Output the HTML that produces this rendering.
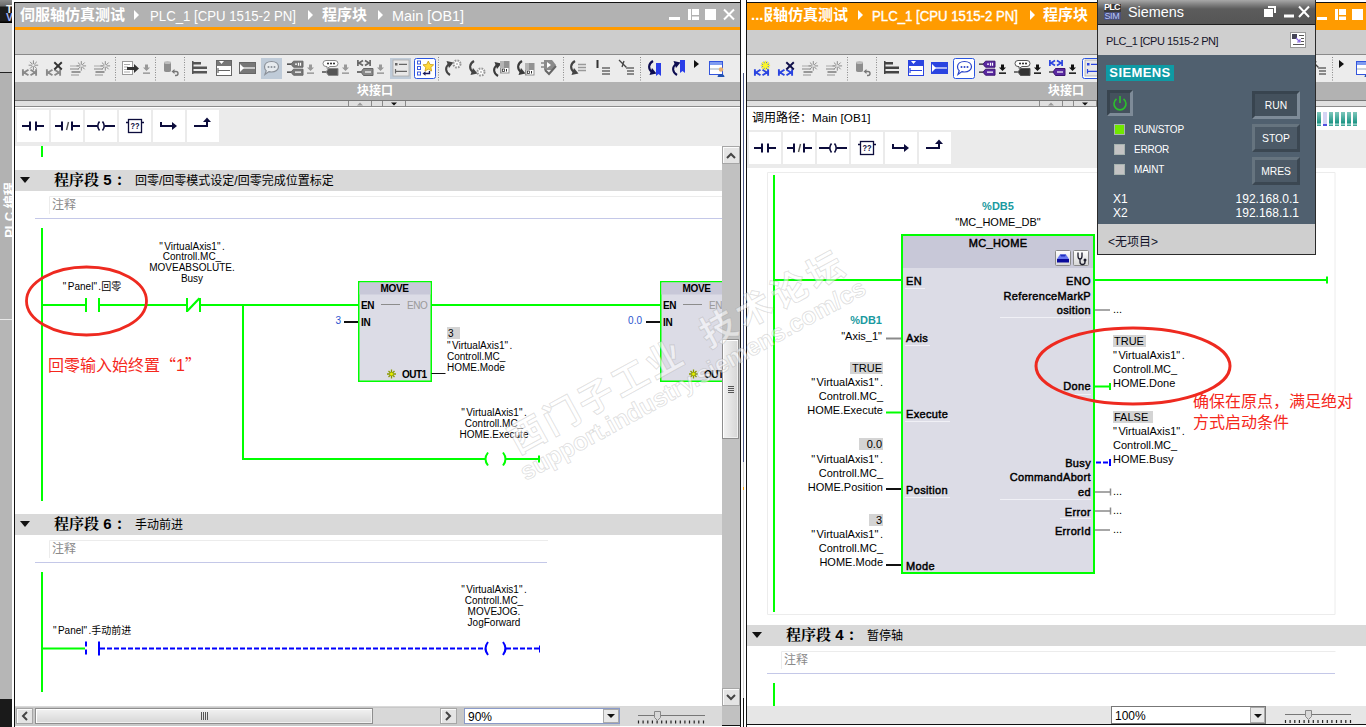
<!DOCTYPE html>
<html lang="zh">
<head>
<meta charset="utf-8">
<title>TIA Portal</title>
<style>
html,body{margin:0;padding:0;background:#fff;}
body{width:1366px;height:727px;overflow:hidden;position:relative;font-family:"Liberation Sans","Noto Sans CJK SC",sans-serif;font-size:12px;color:#000;}
.a{position:absolute;}
.t{position:absolute;white-space:nowrap;line-height:1;}
.b{font-weight:bold;}
.w{color:#fff;}
.c{text-align:center;}
.r{text-align:right;}
.lad{position:absolute;width:32px;height:32px;background:#fff;}
.hdr{position:absolute;background:#d9d9d9;height:21px;}
.seg{position:absolute;white-space:nowrap;line-height:1;font-family:"Liberation Sans","Noto Serif CJK SC",serif;font-weight:bold;font-size:15px;}
.cmt{position:absolute;white-space:nowrap;line-height:1;color:#8a8a8a;font-size:12px;}
.val{background:#d4d4d4;}
.sb{-webkit-text-stroke:0.450px #000;letter-spacing:0.350px;}
.cj{font-family:"Noto Sans CJK SC",sans-serif;}
.ml{position:absolute;line-height:11px;font-size:10px;white-space:nowrap;}
.ml2{position:absolute;line-height:14px;font-size:12px;white-space:nowrap;}
svg{position:absolute;overflow:visible;}
</style>
</head>
<body>
<!-- dock -->
<div class="a" style="left:0px;top:0px;width:12px;height:727px;background:#b6b6b6;"></div>
<div class="a" style="left:0px;top:0px;width:12px;height:23px;background:#1a1a1a;background:linear-gradient(180deg,#8c8c8c 0,#6a6a6a 6px,#1c1c1c 7px,#1c1c1c 21px,#000 22px);overflow:hidden;"></div>
<div class="a" style="left:0;top:0;width:12px;height:22px;overflow:hidden;"><div class="t b" style="left:6px;top:4px;font-size:10.500px;color:#f0f0f0;">T</div>
<div class="t b" style="left:6px;top:12px;font-size:10.500px;color:#a0b0f4;">V</div></div>
<div class="a" style="left:0px;top:23px;width:12px;height:49px;background:#cacaca;"></div>
<div class="a" style="left:0px;top:72px;width:12px;height:1px;background:#222;"></div>
<div class="a" style="left:0px;top:73px;width:12px;height:246px;background:#b2b2b2;"></div>
<div class="a" style="left:0px;top:319px;width:12px;height:1px;background:#e8e8e8;"></div>
<div class="a" style="left:0px;top:699px;width:12px;height:28px;background:#1a1a1a;"></div>
<div class="a" style="left:0;top:150px;width:12px;height:120px;overflow:hidden;"><div class="t b w" style="left:9px;top:60px;font-size:13px;transform:translate(-50%,-50%) rotate(-90deg);">PLC 编程</div></div>
<div class="a" style="left:12px;top:0px;width:2px;height:727px;background:#fff;"></div>
<div class="a" style="left:14px;top:2px;width:1px;height:725px;background:#111;"></div>
<!-- left pane -->
<div class="a" style="left:15px;top:0;width:725px;height:727px;overflow:hidden;background:#fff;"><div class="a" style="left:-15px;top:0;width:1366px;height:727px;">
<div class="a" style="left:15px;top:2px;width:725px;height:1px;background:#111;"></div>
<div class="a" style="left:15px;top:3px;width:725px;height:24px;background:#b2b2b2;"></div>
<div class="a" style="left:15px;top:27px;width:725px;height:3px;background:#ff9b00;"></div>
<div class="a" style="left:15px;top:30px;width:725px;height:24px;background:#cdcdcd;"></div>
<div class="a" style="left:15px;top:54px;width:725px;height:1px;background:#8a8a8a;"></div>
<div class="a" style="left:15px;top:55px;width:725px;height:27px;background:#ececec;"></div>
<div class="a" style="left:15px;top:82px;width:725px;height:18px;background:#b2b2b2;"></div>
<div class="a" style="left:15px;top:100px;width:725px;height:1px;background:#787878;"></div>
<div class="a" style="left:15px;top:101px;width:725px;height:5px;background:#e0e0e0;"></div>
<div class="a" style="left:15px;top:106px;width:725px;height:1px;background:#8c8c8c;"></div>
<div class="a" style="left:15px;top:107px;width:725px;height:1px;background:#fff;"></div>
<div class="a" style="left:15px;top:108px;width:725px;height:38px;background:#ebebeb;"></div>
<div class="t b w" style="left:20px;top:7px;font-size:15px;">伺服轴仿真测试</div>
<div class="t w" style="left:150px;top:8px;font-size:15px;transform:scaleX(0.880);transform-origin:0 0;">PLC_1 [CPU 1515-2 PN]</div>
<div class="t b w" style="left:322px;top:7px;font-size:15px;">程序块</div>
<div class="t w" style="left:392px;top:8px;font-size:15px;transform:scaleX(0.960);transform-origin:0 0;">Main [OB1]</div>
<div class="t b w" style="left:357px;top:85px;font-size:12px;">块接口</div>
<div class="a" style="left:15px;top:170px;width:707px;height:21px;background:#d9d9d9;"></div>
<div class="seg" style="left:54px;top:172px;">程序段 5<span style="margin-left:4px">：</span></div>
<div class="t " style="left:135px;top:175px;font-size:12px;">回零/回零模式设定/回零完成位置标定</div>
<div class="cmt" style="left:52px;top:199px;">注释</div>
<div class="a" style="left:15px;top:514px;width:707px;height:21px;background:#d9d9d9;"></div>
<div class="seg" style="left:54px;top:516px;">程序段 6<span style="margin-left:4px">：</span></div>
<div class="t " style="left:135px;top:519px;font-size:12px;">手动前进</div>
<div class="cmt" style="left:52px;top:543px;">注释</div>
<svg width="1366" height="727" viewBox="0 0 1366 727" style="left:0;top:0;"><g fill="#fff"><path d="M134 10l5 5-5 5z"/><path d="M308 10l5 5-5 5z"/><path d="M378 10l5 5-5 5z"/><rect x="669" y="17" width="11" height="3"/><path d="M688 9h3v11h-3zM692 9h7v6h-7zM692 16.500h7v3.500h-7z"/><rect x="705" y="9" width="11" height="11"/><path d="M724 9.500l10 10M734 9.500l-10 10" stroke="#fff" stroke-width="2" fill="none"/></g><g transform="translate(22,60)"><path d="M0.900 9.300v6.500M6.500 9.800L2 12.500l4.500 2.800M14.100 9.300v6.500M8.500 9.800l4.500 2.700-4.500 2.800" stroke="#8a8a8a" stroke-width="1.900" fill="none"/><path d="M12.6 5.2L16.2 5.2M12.2 6.0L14.8 8.6M11.4 6.4L11.4 10.0M10.6 6.0L8.0 8.6M10.2 5.2L6.6 5.2M10.6 4.4L8.0 1.8M11.4 4.0L11.4 0.4M12.2 4.4L14.8 1.8" stroke="#8a8a8a" stroke-width="1" fill="none"/></g><g transform="translate(46,60)"><path d="M0.900 9.300v6.500M6.500 9.800L2 12.500l4.500 2.800M14.100 9.300v6.500M8.500 9.800l4.500 2.700-4.500 2.800" stroke="#8a8a8a" stroke-width="1.900" fill="none"/><path d="M8.300 2.300l7.500 7.200M15.800 2.300l-7.500 7.200" stroke="#333" stroke-width="1.900"/></g><g transform="translate(69,60)"><path d="M1 6h9" stroke="#c8c8c8" stroke-width="1.800"/><path d="M1 9h9" stroke="#b4b4b4" stroke-width="1.800"/><path d="M2.500 12h9" stroke="#8e8e8e" stroke-width="1.800"/><path d="M2 15h8" stroke="#bcbcbc" stroke-width="1.800"/><path d="M13.5 5.9L17.1 5.9M13.1 6.7L15.7 9.3M12.3 7.1L12.3 10.7M11.5 6.7L8.9 9.3M11.1 5.9L7.5 5.9M11.5 5.1L8.9 2.5M12.3 4.7L12.3 1.1M13.1 5.1L15.7 2.5" stroke="#8c8c8c" stroke-width="1" fill="none"/></g><g transform="translate(93,60)"><path d="M1 6h9" stroke="#c8c8c8" stroke-width="1.800"/><path d="M1 9h9" stroke="#b4b4b4" stroke-width="1.800"/><path d="M2.500 12h9" stroke="#8e8e8e" stroke-width="1.800"/><path d="M2 15h8" stroke="#bcbcbc" stroke-width="1.800"/><path d="M13.5 5.9L17.1 5.9M13.1 6.7L15.7 9.3M12.3 7.1L12.3 10.7M11.5 6.7L8.9 9.3M11.1 5.9L7.5 5.9M11.5 5.1L8.9 2.5M12.3 4.7L12.3 1.1M13.1 5.1L15.7 2.5" stroke="#8c8c8c" stroke-width="1" fill="none"/></g><path d="M115.5 57v24M184.5 57v24M438.5 57v24M563.5 57v24M640.5 57v24M155.5 57v24" stroke="#8a8a8a" stroke-dasharray="1 1.500"/><g transform="translate(122,60)"><rect x="0.500" y="1.500" width="10" height="13" fill="#fff" stroke="#999"/><path d="M2 4.500h6M2 7h4M2 12h6M2 9.500h3" stroke="#aaa" stroke-width="1"/><path d="M5 7h7v-3l5 4.500-5 4.500v-3h-7z" fill="#333"/></g><g transform="translate(143,64.4)" fill="#999"><path d="M2 0h3v3h2l-3.500 3.500L0 3h2z"/><rect x="0" y="8" width="7" height="1.500"/></g><g transform="translate(163,60)"><path d="M1 2.500v8a3.500 1.500 0 0 0 7 0v-8z" fill="#8e8e8e"/><ellipse cx="4.500" cy="2.500" rx="3.500" ry="1.500" fill="#bdbdbd"/><path d="M10 11.500h3a2 2 0 0 1 0 4h-1" stroke="#777" stroke-width="1.400" fill="none"/><path d="M8.500 11.500l3-2.500v5z" fill="#777"/></g><g transform="translate(192,60)" fill="#555"><rect x="0" y="2" width="9" height="2.500"/><rect x="0" y="6.500" width="15" height="2.500"/><rect x="0" y="11" width="15" height="2.500"/><rect x="0" y="1" width="1.500" height="13"/></g><g transform="translate(216,60)"><rect x="0.500" y="0.500" width="15" height="15" fill="#fff" stroke="#666"/><rect x="1" y="1" width="14" height="5" fill="#777"/><path d="M3 1l2.500 3 2.500-3z" fill="#fff"/><path d="M2 10.500h12M2 8v5" stroke="#666" stroke-width="1.200"/></g><g transform="translate(239,60)"><rect x="0.500" y="2.500" width="16" height="11" fill="#777" stroke="#666"/><path d="M1 4l4 4-4 4z" fill="#fff"/><path d="M4 8h12" stroke="#fff" stroke-width="1.200"/></g><rect x="261" y="58" width="21" height="21" fill="#bfcbd8"/><g transform="translate(263,60)"><path d="M8.500 1.500c4.200 0 7 2.300 7 5.300s-3 5.200-7 5.200c-1 0-1.800-.1-2.600-.4L2 14.500l1.200-3.800C2 9.800 1.500 8.400 1.500 6.800c0-3 2.800-5.300 7-5.300z" fill="#e6eaee" stroke="#8a9098" stroke-width="1.200"/><circle cx="5.500" cy="7" r="1" fill="#8a9098"/><circle cx="8.500" cy="7" r="1" fill="#8a9098"/><circle cx="11.500" cy="7" r="1" fill="#8a9098"/></g><g transform="translate(287,60.7)"><path d="M0 3.500h4M0 11.500h4" stroke="#222" stroke-width="1.200"/><path d="M4 3.500l2.500-3h9.500v6h-9.500zM4 11.500l2.500-3h9.500v6h-9.500z" fill="#777" stroke="#666" stroke-width="1"/><path d="M8 3.500h2M11.500 2v3M13.500 2v3M8 11.500h6" stroke="#fff" stroke-width="1.200"/></g><g transform="translate(307,64.4)" fill="#999"><path d="M2 0h3v3h2l-3.500 3.500L0 3h2z"/><rect x="0" y="8" width="7" height="1.500"/></g><g transform="translate(322,60)"><path d="M4 0.500h9a2.500 2.500 0 0 1 0 6h-5l-3 2v-2h-1a2.500 2.500 0 0 1 0-6z" fill="#fff" stroke="#888"/><circle cx="6" cy="3.500" r="1" fill="#222"/><circle cx="9" cy="3.500" r="1" fill="#222"/><circle cx="12" cy="3.500" r="1" fill="#222"/><path d="M0 12h4" stroke="#222" stroke-width="1.200"/><path d="M4 12l2.500-3.500h9.500v7h-9.500z" fill="#555" stroke="#888"/></g><g transform="translate(342,64.4)" fill="#999"><path d="M2 0h3v3h2l-3.500 3.500L0 3h2z"/><rect x="0" y="8" width="7" height="1.500"/></g><g transform="translate(357,60)"><path d="M0.900 0v6M6 0.500L2 3l4 2.500M13.100 0v6M8 0.500l4 2.500-4 2.500" stroke="#666" stroke-width="1.700" fill="none"/><path d="M0 12h4" stroke="#222" stroke-width="1.200"/><path d="M4 12l2.500-3.500h9.500v7h-9.500z" fill="#888" stroke="#666"/><path d="M8 12h6" stroke="#fff" stroke-width="1.200"/></g><g transform="translate(377,64.4)" fill="#999"><path d="M2 0h3v3h2l-3.500 3.500L0 3h2z"/><rect x="0" y="8" width="7" height="1.500"/></g><rect x="390" y="58" width="21" height="21" fill="#bfcbd8"/><g transform="translate(393,60)"><rect x="0" y="0" width="16" height="16" fill="#e8e8e8" stroke="#aaa" stroke-width="0.800"/><rect x="2" y="3" width="2.500" height="2.500" fill="#666"/><path d="M6 4.300h8M2.500 9v4.500M2.500 11.300h11.500" stroke="#666" stroke-width="1.200" fill="none"/></g><rect x="414.5" y="58.5" width="21" height="20" rx="2" fill="#fff" stroke="#2a55e0"/><g transform="translate(417,60)"><rect x="0.500" y="1" width="3" height="3" fill="none" stroke="#3b5be0"/><rect x="0.500" y="6.500" width="3" height="3" fill="none" stroke="#3b5be0"/><rect x="0.500" y="12" width="3" height="3" fill="none" stroke="#3b5be0"/><path d="M10.500 0l1.900 4 4.400.5-3.300 3 .9 4.300-3.900-2.200-3.900 2.200.9-4.300-3.300-3 4.400-.5z" transform="translate(2.400 1) scale(0.850)" fill="#ffd83a" stroke="#c89a10" stroke-width="0.900"/><path d="M12.500 11v2.500h-5" stroke="#1a1a5a" stroke-width="1.400" fill="none"/><path d="M5.500 13.500l3-2.300v4.600z" fill="#1a1a5a"/></g><g transform="translate(445,60)"><path d="M5 15c-5-3-5-8-1-11" stroke="#444" stroke-width="2.100" fill="none"/><path d="M1.500 1l7 1.500-4.500 5.500z" fill="#444"/></g><circle cx="457" cy="64" r="3.500" fill="#fff" stroke="#999" stroke-width="2" stroke-dasharray="1.700 1.050"/><path d="M455.8 62.8l2.400 2.400M458.2 62.8l-2.400 2.400" stroke="#bbb" stroke-width="0.800"/><g transform="translate(469,60)"><path d="M5 1c-5 3-5 8-1 11" stroke="#444" stroke-width="2.100" fill="none"/><path d="M1.500 15l7-1.500-4.500-5.500z" fill="#444"/></g><circle cx="481" cy="72" r="3.500" fill="#fff" stroke="#999" stroke-width="2" stroke-dasharray="1.700 1.050"/><path d="M479.8 70.8l2.400 2.400M482.2 70.8l-2.400 2.400" stroke="#bbb" stroke-width="0.800"/><g transform="translate(493,61)"><path d="M5 15c-5-3-5-8-1-11" stroke="#3a3a3a" stroke-width="2.100" fill="none"/><path d="M1.500 1l7 1.500-4.500 5.500z" fill="#3a3a3a"/></g><rect x="500" y="61" width="9.500" height="12.500" fill="#929292"/><rect x="500" y="61" width="4" height="7" fill="#b4b4b4"/><rect x="501.5" y="68" width="7" height="4.500" fill="#fff"/><rect x="502.5" y="69" width="2" height="2.500" fill="none" stroke="#333" stroke-width="0.800"/><rect x="506" y="69" width="1" height="2.500" fill="#333"/><g transform="translate(517,60)"><path d="M5 1c-5 3-5 8-1 11" stroke="#3a3a3a" stroke-width="2.100" fill="none"/><path d="M1.500 15l7-1.500-4.500-5.500z" fill="#3a3a3a"/></g><rect x="525" y="63" width="9.500" height="12.500" fill="#929292"/><rect x="525" y="63" width="4" height="7" fill="#b4b4b4"/><rect x="526.5" y="70" width="7" height="4.500" fill="#fff"/><rect x="527.5" y="71" width="2" height="2.500" fill="none" stroke="#333" stroke-width="0.800"/><rect x="531" y="71" width="1" height="2.500" fill="#333"/><g transform="translate(541,60)"><path d="M0 3h3M0 7h3" stroke="#555" stroke-width="1.200"/><path d="M3 0h8l4 5-4 5h-8z" fill="#8a8a8a"/><path d="M6 2l4 3-4 3z" fill="#fff"/><path d="M4 10l4 4 7-8" stroke="#666" stroke-width="2" fill="none"/></g><g transform="translate(570,60)"><path d="M5 1c-5 3-5 8-1 11" stroke="#444" stroke-width="2.100" fill="none"/><path d="M1.500 15l7-1.500-4.500-5.500z" fill="#444"/></g><path d="M578 64.5h8M578 67.5h8M578 70.5h8" stroke="#999" stroke-width="1.600"/><path d="M597.5 60v8" stroke="#333" stroke-width="2"/><path d="M602 68h8M602 71h8M602 74h8" stroke="#888" stroke-width="1.800"/><path d="M619 60l8 8M624 61l-2 6" stroke="#444" stroke-width="1.300"/><path d="M626 68h8M627 71h7M627 74h7" stroke="#888" stroke-width="1.800"/><g transform="translate(648,60)"><path d="M5 1c-5 3-5 8-1 11" stroke="#0c0c50" stroke-width="2.100" fill="none"/><path d="M1.500 15l7-1.500-4.500-5.500z" fill="#0c0c50"/></g><path d="M656 63h5v13l-2.500-2-2.500 2z" fill="#2a3ee8"/><g transform="translate(672,60)"><path d="M5 15c-5-3-5-8-1-11" stroke="#0c0c50" stroke-width="2.100" fill="none"/><path d="M1.500 1l7 1.500-4.500 5.500z" fill="#0c0c50"/></g><path d="M680 60h5v13l-2.500-2-2.500 2z" fill="#2a3ee8"/><path d="M694 60l5 4-5 4z" fill="#111"/><g transform="translate(709,61)"><rect x="0.500" y="0.500" width="13" height="13" fill="#fff" stroke="#3355dd"/><rect x="1" y="1" width="12" height="3" fill="#7f9cf0"/><path d="M1 8h12" stroke="#9ab" stroke-width="1"/><circle cx="12" cy="8.500" r="2.200" fill="#e8b070"/><path d="M8.500 16c0-4 7-4 7 0z" fill="#2050b0"/></g><path d="M348.500 101v6M371.500 101v6M382.500 101v6M405.500 101v6" stroke="#8a8a8a"/><path d="M357 105.500l3-3 3 3z" fill="#999"/><path d="M391 102.500h6l-3 3z" fill="#111"/><rect x="17" y="110" width="32" height="32" fill="#fff"/><rect x="51" y="110" width="32" height="32" fill="#fff"/><rect x="85" y="110" width="32" height="32" fill="#fff"/><rect x="119" y="110" width="32" height="32" fill="#fff"/><rect x="153" y="110" width="32" height="32" fill="#fff"/><rect x="187" y="110" width="32" height="32" fill="#fff"/><path d="M22 126h9M30 121.5v9M36 121.5v9M35 126h9" stroke="#0c0c3c" stroke-width="2" fill="none"/><path d="M55 126h8M62 121.5v9M72 121.5v9M71 126h9" stroke="#0c0c3c" stroke-width="2" fill="none"/><path d="M68.5 122l-2 8" stroke="#555" stroke-width="1.400"/><path d="M87 126h10M105 126h10" stroke="#0c0c3c" stroke-width="2"/><path d="M99.5 121.5q-3.500 4.500 0 9M102.5 121.5q3.500 4.500 0 9" stroke="#0c0c3c" stroke-width="1.600" fill="none"/><rect x="128.5" y="119.5" width="13" height="13" fill="#fff" stroke="#0c0c3c" stroke-width="1.300"/><path d="M126 122.5h2.500M141.5 122.5h2.500" stroke="#0c0c3c" stroke-width="1.300"/><text x="135" y="128.8" font-size="9.500" font-weight="bold" font-family="Liberation Sans,sans-serif" text-anchor="middle" fill="#0c0c3c" textLength="9" lengthAdjust="spacingAndGlyphs">??</text><path d="M161 122v4h12" stroke="#0c0c3c" stroke-width="2" fill="none"/><path d="M172 122l5 4-5 4z" fill="#0c0c3c"/><path d="M194 126h13v-5" stroke="#0c0c3c" stroke-width="2" fill="none"/><path d="M203 122l4-4.500 4 4.500z" fill="#0c0c3c"/><path d="M20 177h10l-5.0 6z" fill="#111"/><path d="M20 521h10l-5.0 6z" fill="#111"/><path d="M49.500 214v-17.500h673" stroke="#ececec" fill="none"/><path d="M35 218.500h688" stroke="#c4c8e8"/><path d="M49.500 558v-17.500h498.500" stroke="#ececec" fill="none"/><path d="M35 562.500h512" stroke="#c4c8e8"/><path d="M42 146v11M42 228v273M42 572v120" stroke="#00ff00" stroke-width="2"/><path d="M43 305h43M99 305h88M200 305h158M431 305h229M243 305v154h242M506 459h33M539 455.500v7" stroke="#00ff00" stroke-width="2" fill="none"/><path d="M86 298v14M99 298v14" stroke="#00ff00" stroke-width="2"/><path d="M187 298v14M200 298v14" stroke="#00ff00" stroke-width="2"/><path d="M199.500 298.300l-12.500 13" stroke="#00ff00" stroke-width="2.200"/><path d="M488 452.500q-5 6.500 0 13M503 452.500q5 6.500 0 13" stroke="#00ff00" stroke-width="2" fill="none"/><rect x="358.75" y="281.750" width="72.500" height="99.500" fill="#dcdce6" stroke="#00ff00" stroke-width="1.500"/><rect x="359.5" y="282.500" width="71" height="12" fill="#c8c8d8"/><path d="M381 304.500h19" stroke="#8c8c8c"/><path d="M344 322h14" stroke="#111" stroke-width="2"/><path d="M431.5 373.500h14" stroke="#111"/><path d="M391.5 369.500v9M387 374h9M388.5 371l6 6M394.5 371l-6 6" stroke="#8a9a00" stroke-width="1.300"/><circle cx="391.5" cy="374" r="1.500" fill="#e8f000"/><rect x="660.75" y="281.750" width="72.500" height="99.500" fill="#dcdce6" stroke="#00ff00" stroke-width="1.500"/><rect x="661.5" y="282.500" width="71" height="12" fill="#c8c8d8"/><path d="M683 304.500h19" stroke="#8c8c8c"/><path d="M646 322h14" stroke="#111" stroke-width="2"/><path d="M733.5 373.500h14" stroke="#111"/><path d="M693.5 369.500v9M689 374h9M690.5 371l6 6M696.5 371l-6 6" stroke="#8a9a00" stroke-width="1.300"/><circle cx="693.5" cy="374" r="1.500" fill="#e8f000"/><ellipse cx="86.500" cy="301" rx="60" ry="34" fill="none" stroke="#ee2a20" stroke-width="2.800"/><path d="M43 648.5h42" stroke="#00ff00" stroke-width="2"/><path d="M86 641.5v14" stroke="#0000ff" stroke-width="2" stroke-dasharray="5 3"/><path d="M99 641.5v14" stroke="#0000ff" stroke-width="2"/><path d="M100 648.5h386M506 648.5h33" stroke="#0000ff" stroke-width="2" stroke-dasharray="5 2"/><path d="M539.500 645.5v7" stroke="#0000ff"/><path d="M488 642.0q-5 6.500 0 13M503 642.0q5 6.500 0 13" stroke="#0000ff" stroke-width="2" fill="none"/></svg>
<div class="t " style="left:92px;top:281.6px;font-size:10px;transform:translateX(-50%);"><span style="letter-spacing:0.14em">&quot;</span>Panel<span style="letter-spacing:0.14em">&quot;</span>.回零</div>
<div class="t " style="left:192px;top:241.6px;font-size:10px;transform:translateX(-50%);"><span style="letter-spacing:0.14em">&quot;</span>VirtualAxis1<span style="letter-spacing:0.14em">&quot;</span>.</div>
<div class="t " style="left:192px;top:252.4px;font-size:10px;transform:translateX(-50%);">Controll.MC_</div>
<div class="t " style="left:192px;top:263.2px;font-size:10px;transform:translateX(-50%);">MOVEABSOLUTE.</div>
<div class="t " style="left:192px;top:274.0px;font-size:10px;transform:translateX(-50%);">Busy</div>
<div class="t b" style="left:394.5px;top:284.1px;font-size:10px;transform:translateX(-50%);letter-spacing:-0.400px;">MOVE</div>
<div class="t b" style="left:361px;top:300.6px;font-size:10px;letter-spacing:-0.300px;">EN</div>
<div class="t " style="left:407px;top:300.6px;font-size:10px;color:#9a9a9a;letter-spacing:-0.500px;">ENO</div>
<div class="t b" style="left:361px;top:317.6px;font-size:10px;letter-spacing:-0.300px;">IN</div>
<div class="t b" style="left:402px;top:369.6px;font-size:10px;letter-spacing:-0.500px;">OUT1</div>
<div class="t b" style="left:696.5px;top:284.1px;font-size:10px;transform:translateX(-50%);letter-spacing:-0.400px;">MOVE</div>
<div class="t b" style="left:663px;top:300.6px;font-size:10px;letter-spacing:-0.300px;">EN</div>
<div class="t " style="left:709px;top:300.6px;font-size:10px;color:#9a9a9a;letter-spacing:-0.500px;">ENO</div>
<div class="t b" style="left:663px;top:317.6px;font-size:10px;letter-spacing:-0.300px;">IN</div>
<div class="t b" style="left:704px;top:369.6px;font-size:10px;letter-spacing:-0.500px;">OUT1</div>
<div class="t " style="left:341px;top:316.1px;font-size:10px;transform:translateX(-100%);color:#2a55d0;">3</div>
<div class="t " style="left:642px;top:316.1px;font-size:10px;transform:translateX(-100%);color:#2a55d0;">0.0</div>
<div class="a" style="left:447px;top:327px;width:13px;height:12px;background:#d4d4d4;"></div>
<div class="t " style="left:448px;top:328.6px;font-size:10px;">3</div>
<div class="t " style="left:447px;top:340.6px;font-size:10px;"><span style="letter-spacing:0.14em">&quot;</span>VirtualAxis1<span style="letter-spacing:0.14em">&quot;</span>.</div>
<div class="t " style="left:447px;top:351.6px;font-size:10px;">Controll.MC_</div>
<div class="t " style="left:447px;top:362.6px;font-size:10px;">HOME.Mode</div>
<div class="t " style="left:494px;top:408.1px;font-size:10px;transform:translateX(-50%);"><span style="letter-spacing:0.14em">&quot;</span>VirtualAxis1<span style="letter-spacing:0.14em">&quot;</span>.</div>
<div class="t " style="left:494px;top:419.1px;font-size:10px;transform:translateX(-50%);">Controll.MC_</div>
<div class="t " style="left:494px;top:430.1px;font-size:10px;transform:translateX(-50%);">HOME.Execute</div>
<div class="t " style="left:48px;top:356px;font-size:16px;color:#f5281c;font-weight:400;">回零输入始终置<span class="cj">“</span>1<span class="cj">”</span></div>
<div class="t " style="left:53px;top:625.6px;font-size:10px;"><span style="letter-spacing:0.14em">&quot;</span>Panel<span style="letter-spacing:0.14em">&quot;</span>.手动前进</div>
<div class="t " style="left:494px;top:585.1px;font-size:10px;transform:translateX(-50%);"><span style="letter-spacing:0.14em">&quot;</span>VirtualAxis1<span style="letter-spacing:0.14em">&quot;</span>.</div>
<div class="t " style="left:494px;top:596.2px;font-size:10px;transform:translateX(-50%);">Controll.MC_</div>
<div class="t " style="left:494px;top:607.3px;font-size:10px;transform:translateX(-50%);">MOVEJOG.</div>
<div class="t " style="left:494px;top:618.4px;font-size:10px;transform:translateX(-50%);">JogForward</div>
<div class="a" style="left:722px;top:146px;width:18px;height:581px;background:#c1c1c1;"></div>
<div class="a" style="left:15px;top:706px;width:707px;height:19px;background:#d6d6d6;"></div>
<div class="a" style="left:15px;top:725px;width:725px;height:1px;background:#111;"></div>
<div class="a" style="left:15px;top:726px;width:725px;height:1px;background:#fff;"></div>
<div class="a" style="left:722px;top:146px;width:18px;height:560px;background:#c1c1c1;"></div>
<div class="a" style="left:722px;top:146px;width:18px;height:18px;background:#e4e4e4;box-sizing:border-box;border:1px solid #a6a6a6;box-shadow:inset 1px 1px 0 #fbfbfb;"></div>
<div class="a" style="left:722px;top:688px;width:18px;height:18px;background:#e4e4e4;box-sizing:border-box;border:1px solid #a6a6a6;box-shadow:inset 1px 1px 0 #fbfbfb;"></div>
<div class="a" style="left:722px;top:339px;width:17px;height:100px;background:#e0e0e0;box-sizing:border-box;border:1px solid #8e8e8e;box-shadow:inset 1px 1px 0 #fff,inset -1px -1px 0 #f0f0f0;background:linear-gradient(90deg,#f2f2f2,#d6d6d6);"></div>
<div class="a" style="left:15px;top:706px;width:707px;height:20px;background:#c8c8c8;"></div>
<div class="a" style="left:15px;top:706px;width:707px;height:1px;background:#d8d8d8;"></div>
<div class="a" style="left:16px;top:708px;width:17px;height:16px;background:#e4e4e4;box-sizing:border-box;border:1px solid #a6a6a6;box-shadow:inset 1px 1px 0 #fbfbfb;"></div>
<div class="a" style="left:35px;top:708px;width:338px;height:16px;background:#e0e0e0;box-sizing:border-box;border:1px solid #8e8e8e;box-shadow:inset 1px 1px 0 #fff,inset -1px -1px 0 #f0f0f0;background:linear-gradient(180deg,#f2f2f2,#d6d6d6);"></div>
<div class="a" style="left:373px;top:708px;width:67px;height:16px;background:#d8d8d8;"></div>
<div class="a" style="left:440px;top:708px;width:17px;height:16px;background:#e4e4e4;box-sizing:border-box;border:1px solid #a6a6a6;box-shadow:inset 1px 1px 0 #fbfbfb;"></div>
<div class="a" style="left:464px;top:708px;width:156px;height:16px;background:#fff;box-sizing:border-box;border:1px solid #8a9ac8;"></div>
<div class="t " style="left:468px;top:710.7px;font-size:12px;">90%</div>
<div class="a" style="left:603px;top:709px;width:16px;height:14px;background:#e8e8e8;box-sizing:border-box;border:1px solid #aaa;"></div>
<div class="a" style="left:620px;top:707px;width:102px;height:19px;background:#dadada;"></div>
<svg width="1366" height="727" viewBox="0 0 1366 727" style="left:0;top:0;"><path d="M727 158l4-4 4 4" stroke="#444" stroke-width="2" fill="none"/><path d="M727 695l4 4 4-4" stroke="#444" stroke-width="2" fill="none"/><path d="M728 386.500h6M728 388.500h6M728 390.500h6M728 392.500h6" stroke="#555"/><path d="M27 712l-4 4 4 4" stroke="#444" stroke-width="2" fill="none"/><path d="M446 712l4 4-4 4" stroke="#444" stroke-width="2" fill="none"/><path d="M201.500 712v8M203.500 712v8M205.500 712v8M207.500 712v8" stroke="#555"/><path d="M607 714h8l-4 4z" fill="#111"/><path d="M638 715.500h67" stroke="#777"/><path d="M638.5 720.500v3M643.1 720.500v3M647.8 720.500v3M652.4 720.500v3M657.1 720.500v3M661.7 720.500v3M666.3 720.500v3M671.0 720.500v3M675.6 720.500v3M680.3 720.500v3M684.9 720.500v3M689.5 720.500v3M694.2 720.500v3M698.8 720.500v3M703.5 720.500v3" stroke="#222" stroke-width="1.200"/><path d="M654.500 711.500h6v6l-3 3-3-3z" fill="#d8d8d8" stroke="#888"/></svg>
</div></div>
<!-- splitter -->
<div class="a" style="left:740px;top:0px;width:1px;height:727px;background:#111;"></div>
<div class="a" style="left:741px;top:0px;width:5px;height:727px;background:#fff;"></div>
<div class="a" style="left:743px;top:73px;width:1px;height:389px;background:#4a5684;"></div>
<div class="a" style="left:743px;top:462px;width:1px;height:236px;background:#d0d0d0;"></div>
<div class="a" style="left:743px;top:487px;width:1px;height:3px;background:#ffa000;"></div>
<div class="a" style="left:743px;top:698px;width:1px;height:29px;background:#111;"></div>
<div class="a" style="left:746px;top:0px;width:1px;height:727px;background:#111;"></div>
<!-- right pane -->
<div class="a" style="left:747px;top:0;width:619px;height:727px;overflow:hidden;background:#fff;"><div class="a" style="left:-747px;top:0;width:1366px;height:727px;">
<div class="a" style="left:747px;top:2px;width:619px;height:1px;background:#111;"></div>
<div class="a" style="left:747px;top:3px;width:619px;height:27px;background:#ff9b00;"></div>
<div class="a" style="left:747px;top:30px;width:619px;height:24px;background:#cdcdcd;"></div>
<div class="a" style="left:747px;top:54px;width:619px;height:1px;background:#8a8a8a;"></div>
<div class="a" style="left:747px;top:55px;width:619px;height:27px;background:#ececec;"></div>
<div class="a" style="left:747px;top:82px;width:619px;height:18px;background:#b2b2b2;"></div>
<div class="a" style="left:747px;top:100px;width:619px;height:1px;background:#787878;"></div>
<div class="a" style="left:747px;top:101px;width:619px;height:5px;background:#e0e0e0;"></div>
<div class="a" style="left:747px;top:106px;width:619px;height:1px;background:#8c8c8c;"></div>
<div class="a" style="left:747px;top:130px;width:619px;height:38px;background:#ebebeb;"></div>
<div class="t b w" style="left:751px;top:7px;font-size:15px;">...</div>
<div class="a" style="left:764px;top:3px;width:90px;height:24px;overflow:hidden;"><div class="t b w" style="left:-6px;top:4px;font-size:15px;">服轴仿真测试</div></div>
<div class="t w" style="left:872px;top:8px;font-size:15px;transform:scaleX(0.880);transform-origin:0 0;-webkit-text-stroke:0.400px #fff;">PLC_1 [CPU 1515-2 PN]</div>
<div class="t b w" style="left:1043px;top:7px;font-size:15px;">程序块</div>
<div class="t b w" style="left:1048px;top:85px;font-size:12px;">块接口</div>
<div class="t " style="left:752px;top:112px;font-size:12px;">调用路径：<span style="font-size:11.700px;">Main [OB1]</span></div>
<div class="a" style="left:747px;top:625px;width:619px;height:21px;background:#d9d9d9;"></div>
<div class="seg" style="left:786px;top:627px;">程序段 4<span style="margin-left:4px">：</span></div>
<div class="t " style="left:867px;top:630px;font-size:12px;">暂停轴</div>
<div class="cmt" style="left:784px;top:654px;">注释</div>
<svg width="1366" height="727" viewBox="0 0 1366 727" style="left:0;top:0;"><g fill="#fff"><path d="M858 10l5 5-5 5z"/><path d="M1030 10l5 5-5 5z"/><rect x="1317" y="17" width="10" height="3"/><path d="M1335 9h3v11h-3zM1339 9h7v6h-7zM1339 16.500h7v3.500h-7z"/><rect x="1352" y="9" width="11" height="11"/></g><g transform="translate(754,60)"><path d="M0.900 9.300v6.500M6.500 9.800L2 12.500l4.500 2.800M14.100 9.300v6.500M8.500 9.800l4.500 2.700-4.500 2.800" stroke="#2a44e0" stroke-width="1.900" fill="none"/><path d="M13.1 6.2L15.2 7.1M12.1 7.2L13.0 9.3M10.7 7.2L9.8 9.3M9.7 6.2L7.6 7.1M9.7 4.8L7.6 3.9M10.7 3.8L9.8 1.7M12.1 3.8L13.0 1.7M13.1 4.8L15.2 3.9" stroke="#1a4a9a" stroke-width="0.900" fill="none"/><path d="M11.4 5.5L16.1 5.5M11.4 5.5L14.7 8.8M11.4 5.5L11.4 10.2M11.4 5.5L8.1 8.8M11.4 5.5L6.7 5.5M11.4 5.5L8.1 2.2M11.4 5.5L11.4 0.8M11.4 5.5L14.7 2.2" stroke="#fdf62a" stroke-width="1.500" fill="none"/><circle cx="11.4" cy="5.5" r="2" fill="#fdf62a"/></g><g transform="translate(778,60)"><path d="M0.900 9.300v6.500M6.500 9.800L2 12.500l4.500 2.800M14.100 9.300v6.500M8.500 9.800l4.500 2.700-4.500 2.800" stroke="#2a44e0" stroke-width="1.900" fill="none"/><path d="M8.300 2.300l7.500 7.200M15.800 2.300l-7.500 7.200" stroke="#10104a" stroke-width="1.900"/></g><g transform="translate(801,60)"><path d="M1 6h9" stroke="#c8c8c8" stroke-width="1.800"/><path d="M1 9h9" stroke="#b4b4b4" stroke-width="1.800"/><path d="M2.500 12h9" stroke="#8e8e8e" stroke-width="1.800"/><path d="M2 15h8" stroke="#bcbcbc" stroke-width="1.800"/><path d="M13.5 5.9L17.1 5.9M13.1 6.7L15.7 9.3M12.3 7.1L12.3 10.7M11.5 6.7L8.9 9.3M11.1 5.9L7.5 5.9M11.5 5.1L8.9 2.5M12.3 4.7L12.3 1.1M13.1 5.1L15.7 2.5" stroke="#8c8c8c" stroke-width="1" fill="none"/></g><g transform="translate(825,60)"><path d="M1 6h9" stroke="#c8c8c8" stroke-width="1.800"/><path d="M1 9h9" stroke="#b4b4b4" stroke-width="1.800"/><path d="M2.500 12h9" stroke="#8e8e8e" stroke-width="1.800"/><path d="M2 15h8" stroke="#bcbcbc" stroke-width="1.800"/><path d="M13.5 5.9L17.1 5.9M13.1 6.7L15.7 9.3M12.3 7.1L12.3 10.7M11.5 6.7L8.9 9.3M11.1 5.9L7.5 5.9M11.5 5.1L8.9 2.5M12.3 4.7L12.3 1.1M13.1 5.1L15.7 2.5" stroke="#8c8c8c" stroke-width="1" fill="none"/></g><path d="M847.5 57v24M876.5 57v24M1130.5 57v24M1255.5 57v24M1332.5 57v24" stroke="#8a8a8a" stroke-dasharray="1 1.500"/><g transform="translate(855,60)"><path d="M1 2.500v8a3.500 1.500 0 0 0 7 0v-8z" fill="#8e8e8e"/><ellipse cx="4.500" cy="2.500" rx="3.500" ry="1.500" fill="#bdbdbd"/><path d="M10 11.500h3a2 2 0 0 1 0 4h-1" stroke="#777" stroke-width="1.400" fill="none"/><path d="M8.500 11.500l3-2.500v5z" fill="#777"/></g><g transform="translate(884,60)" fill="#444"><rect x="0" y="2" width="9" height="2.500"/><rect x="0" y="6.500" width="15" height="2.500"/><rect x="0" y="11" width="15" height="2.500"/><rect x="0" y="1" width="1.500" height="13"/></g><g transform="translate(908,60)"><rect x="0.500" y="0.500" width="15" height="15" fill="#fff" stroke="#2a44e0"/><rect x="1" y="1" width="14" height="5" fill="#2a44e0"/><path d="M3 1l2.500 3 2.500-3z" fill="#fff"/><path d="M2 10.500h12M2 8v5" stroke="#2a44e0" stroke-width="1.200"/></g><g transform="translate(931,60)"><rect x="0.500" y="2.500" width="16" height="11" fill="#2a44e0" stroke="#2a44e0"/><path d="M1 4l4 4-4 4z" fill="#fff"/><path d="M4 8h12" stroke="#fff" stroke-width="1.200"/></g><rect x="953.5" y="58.5" width="21" height="20" rx="2" fill="#fff" stroke="#2a55e0"/><g transform="translate(956,60)"><path d="M8.500 1.500c4.200 0 7 2.300 7 5.300s-3 5.200-7 5.200c-1 0-1.800-.1-2.600-.4L2 14.500l1.200-3.800C2 9.800 1.500 8.400 1.500 6.800c0-3 2.800-5.300 7-5.300z" fill="#fff" stroke="#2a44c8" stroke-width="1.200"/><circle cx="5.500" cy="7" r="1" fill="#2a44c8"/><circle cx="8.500" cy="7" r="1" fill="#2a44c8"/><circle cx="11.500" cy="7" r="1" fill="#2a44c8"/></g><g transform="translate(979,60.7)"><path d="M0 3.500h4M0 11.500h4" stroke="#222" stroke-width="1.200"/><path d="M4 3.500l2.500-3h9.500v6h-9.500zM4 11.500l2.500-3h9.500v6h-9.500z" fill="#5a28a0" stroke="#3c1470" stroke-width="1"/><path d="M8 3.500h2M11.500 2v3M13.500 2v3M8 11.500h6" stroke="#fff" stroke-width="1.200"/></g><g transform="translate(999,64.4)" fill="#111"><path d="M2 0h3v3h2l-3.500 3.500L0 3h2z"/><rect x="0" y="8" width="7" height="1.500"/></g><g transform="translate(1014,60)"><path d="M4 0.500h9a2.500 2.500 0 0 1 0 6h-5l-3 2v-2h-1a2.500 2.500 0 0 1 0-6z" fill="#fff" stroke="#555"/><circle cx="6" cy="3.500" r="1" fill="#222"/><circle cx="9" cy="3.500" r="1" fill="#222"/><circle cx="12" cy="3.500" r="1" fill="#222"/><path d="M0 12h4" stroke="#222" stroke-width="1.200"/><path d="M4 12l2.500-3.500h9.500v7h-9.500z" fill="#333" stroke="#555"/></g><g transform="translate(1034,64.4)" fill="#111"><path d="M2 0h3v3h2l-3.500 3.500L0 3h2z"/><rect x="0" y="8" width="7" height="1.500"/></g><g transform="translate(1049,60)"><path d="M0.900 0v6M6 0.500L2 3l4 2.500M13.100 0v6M8 0.500l4 2.500-4 2.500" stroke="#2a44e0" stroke-width="1.700" fill="none"/><path d="M0 12h4" stroke="#222" stroke-width="1.200"/><path d="M4 12l2.500-3.500h9.500v7h-9.500z" fill="#5a28a0" stroke="#3c1470"/><path d="M8 12h6" stroke="#fff" stroke-width="1.200"/></g><g transform="translate(1069,64.4)" fill="#111"><path d="M2 0h3v3h2l-3.500 3.500L0 3h2z"/><rect x="0" y="8" width="7" height="1.500"/></g><rect x="1082.5" y="58.5" width="21" height="20" rx="2" fill="#fff" stroke="#2a55e0"/><g transform="translate(1085,60)"><rect x="0" y="0" width="16" height="16" fill="#e8e8e8" stroke="#aaa" stroke-width="0.800"/><rect x="2" y="3" width="2.500" height="2.500" fill="#2a44e0"/><path d="M6 4.300h8M2.500 9v4.500M2.500 11.300h11.500" stroke="#2a44e0" stroke-width="1.200" fill="none"/></g><rect x="1106.5" y="58.5" width="21" height="20" rx="2" fill="#fff" stroke="#2a55e0"/><g transform="translate(1109,60)"><rect x="0.500" y="1" width="3" height="3" fill="none" stroke="#3b5be0"/><rect x="0.500" y="6.500" width="3" height="3" fill="none" stroke="#3b5be0"/><rect x="0.500" y="12" width="3" height="3" fill="none" stroke="#3b5be0"/><path d="M10.500 0l1.900 4 4.400.5-3.300 3 .9 4.300-3.900-2.200-3.900 2.200.9-4.300-3.300-3 4.400-.5z" transform="translate(2.400 1) scale(0.850)" fill="#ffd83a" stroke="#c89a10" stroke-width="0.900"/><path d="M12.500 11v2.500h-5" stroke="#1a1a5a" stroke-width="1.400" fill="none"/><path d="M5.500 13.500l3-2.300v4.600z" fill="#1a1a5a"/></g><g transform="translate(1137,60)"><path d="M5 15c-5-3-5-8-1-11" stroke="#444" stroke-width="2.100" fill="none"/><path d="M1.500 1l7 1.500-4.500 5.500z" fill="#444"/></g><circle cx="1149" cy="64" r="3.500" fill="#fff" stroke="#999" stroke-width="2" stroke-dasharray="1.700 1.050"/><path d="M1147.8 62.8l2.400 2.400M1150.2 62.8l-2.400 2.400" stroke="#bbb" stroke-width="0.800"/><g transform="translate(1161,60)"><path d="M5 1c-5 3-5 8-1 11" stroke="#444" stroke-width="2.100" fill="none"/><path d="M1.500 15l7-1.500-4.500-5.500z" fill="#444"/></g><circle cx="1173" cy="72" r="3.500" fill="#fff" stroke="#999" stroke-width="2" stroke-dasharray="1.700 1.050"/><path d="M1171.8 70.8l2.400 2.400M1174.2 70.8l-2.400 2.400" stroke="#bbb" stroke-width="0.800"/><g transform="translate(1185,61)"><path d="M5 15c-5-3-5-8-1-11" stroke="#3a3a3a" stroke-width="2.100" fill="none"/><path d="M1.500 1l7 1.500-4.500 5.500z" fill="#3a3a3a"/></g><rect x="1192" y="61" width="9.500" height="12.500" fill="#929292"/><rect x="1192" y="61" width="4" height="7" fill="#b4b4b4"/><rect x="1193.5" y="68" width="7" height="4.500" fill="#fff"/><rect x="1194.5" y="69" width="2" height="2.500" fill="none" stroke="#333" stroke-width="0.800"/><rect x="1198" y="69" width="1" height="2.500" fill="#333"/><g transform="translate(1209,60)"><path d="M5 1c-5 3-5 8-1 11" stroke="#3a3a3a" stroke-width="2.100" fill="none"/><path d="M1.500 15l7-1.500-4.500-5.500z" fill="#3a3a3a"/></g><rect x="1217" y="63" width="9.500" height="12.500" fill="#929292"/><rect x="1217" y="63" width="4" height="7" fill="#b4b4b4"/><rect x="1218.5" y="70" width="7" height="4.500" fill="#fff"/><rect x="1219.5" y="71" width="2" height="2.500" fill="none" stroke="#333" stroke-width="0.800"/><rect x="1223" y="71" width="1" height="2.500" fill="#333"/><g transform="translate(1233,60)"><path d="M0 3h3M0 7h3" stroke="#555" stroke-width="1.200"/><path d="M3 0h8l4 5-4 5h-8z" fill="#8a8a8a"/><path d="M6 2l4 3-4 3z" fill="#fff"/><path d="M4 10l4 4 7-8" stroke="#666" stroke-width="2" fill="none"/></g><g transform="translate(1262,60)"><path d="M5 1c-5 3-5 8-1 11" stroke="#444" stroke-width="2.100" fill="none"/><path d="M1.500 15l7-1.500-4.500-5.500z" fill="#444"/></g><path d="M1270 64.5h8M1270 67.5h8M1270 70.5h8" stroke="#999" stroke-width="1.600"/><path d="M1289.5 60v8" stroke="#333" stroke-width="2"/><path d="M1294 68h8M1294 71h8M1294 74h8" stroke="#888" stroke-width="1.800"/><path d="M1311 60l8 8M1316 61l-2 6" stroke="#444" stroke-width="1.300"/><path d="M1318 68h8M1319 71h7M1319 74h7" stroke="#888" stroke-width="1.800"/><path d="M1339 60l5 4-5 4z" fill="#111"/><g transform="translate(1356,61)"><rect x="0.500" y="0.500" width="13" height="13" fill="#fff" stroke="#3355dd"/><rect x="1" y="1" width="12" height="3" fill="#7f9cf0"/><path d="M1 8h12" stroke="#9ab" stroke-width="1"/><circle cx="12" cy="8.500" r="2.200" fill="#e8b070"/><path d="M8.500 16c0-4 7-4 7 0z" fill="#2050b0"/></g><path d="M1039.500 101v6M1062.500 101v6M1073.500 101v6M1096.500 101v6" stroke="#8a8a8a"/><path d="M1048 105.500l3-3 3 3z" fill="#999"/><path d="M1082 102.500h6l-3 3z" fill="#111"/><rect x="749" y="132" width="32" height="32" fill="#fff"/><rect x="783" y="132" width="32" height="32" fill="#fff"/><rect x="817" y="132" width="32" height="32" fill="#fff"/><rect x="851" y="132" width="32" height="32" fill="#fff"/><rect x="885" y="132" width="32" height="32" fill="#fff"/><rect x="919" y="132" width="32" height="32" fill="#fff"/><path d="M754 148h9M762 143.5v9M768 143.5v9M767 148h9" stroke="#0c0c3c" stroke-width="2" fill="none"/><path d="M787 148h8M794 143.5v9M804 143.5v9M803 148h9" stroke="#0c0c3c" stroke-width="2" fill="none"/><path d="M800.5 144l-2 8" stroke="#555" stroke-width="1.400"/><path d="M819 148h10M837 148h10" stroke="#0c0c3c" stroke-width="2"/><path d="M831.5 143.5q-3.500 4.500 0 9M834.5 143.5q3.500 4.500 0 9" stroke="#0c0c3c" stroke-width="1.600" fill="none"/><rect x="860.5" y="141.5" width="13" height="13" fill="#fff" stroke="#0c0c3c" stroke-width="1.300"/><path d="M858 144.5h2.500M873.5 144.5h2.500" stroke="#0c0c3c" stroke-width="1.300"/><text x="867" y="150.8" font-size="9.500" font-weight="bold" font-family="Liberation Sans,sans-serif" text-anchor="middle" fill="#0c0c3c" textLength="9" lengthAdjust="spacingAndGlyphs">??</text><path d="M893 144v4h12" stroke="#0c0c3c" stroke-width="2" fill="none"/><path d="M904 144l5 4-5 4z" fill="#0c0c3c"/><path d="M926 148h13v-5" stroke="#0c0c3c" stroke-width="2" fill="none"/><path d="M935 144l4-4.500 4 4.500z" fill="#0c0c3c"/><rect x="1317" y="112" width="4" height="14" fill="url(#tg)"/><rect x="1323" y="112" width="4" height="14" fill="#d4d4f4"/><rect x="1323" y="124" width="4" height="2" fill="#5050e0"/><rect x="1329" y="112" width="4" height="14" fill="url(#tg)"/><rect x="1335" y="112" width="4" height="14" fill="url(#tg)"/><rect x="1341" y="112" width="4" height="14" fill="url(#tg)"/><rect x="1347" y="112" width="4" height="14" fill="url(#tg)"/><rect x="1353" y="112" width="4" height="14" fill="url(#tg)"/><defs><linearGradient id="tg" x1="0" y1="0" x2="0" y2="1"><stop offset="0" stop-color="#7fc8bc"/><stop offset="0.800" stop-color="#1a9484"/><stop offset="0.850" stop-color="#bfe4de"/><stop offset="1" stop-color="#1a9484"/></linearGradient></defs><path d="M767.500 614.500v-442h567.500v442z" stroke="#ececec" fill="none"/><path d="M752 632h10l-5.0 6z" fill="#111"/><path d="M781.500 669v-17.500h554" stroke="#ececec" fill="none"/><path d="M767 673.500h568" stroke="#c4c8e8"/><path d="M774 175v437M774 683v23" stroke="#00ff00" stroke-width="2"/><path d="M775 280h126M1095 280h232M1327 276.500v7" stroke="#00ff00" stroke-width="2" fill="none"/><rect x="902" y="235" width="192" height="338" fill="#dcdce6" stroke="#00ff00" stroke-width="2"/><rect x="903" y="236" width="190" height="32" fill="#c8c8d8"/><defs><linearGradient id="bg1" x1="0" y1="0" x2="0" y2="1"><stop offset="0" stop-color="#ffffff"/><stop offset="1" stop-color="#d6d6d6"/></linearGradient></defs><rect x="1055.500" y="250.500" width="15" height="15" rx="1" fill="url(#bg1)" stroke="#8a8a8a"/><rect x="1073.500" y="250.500" width="15" height="15" rx="1" fill="url(#bg1)" stroke="#8a8a8a"/><path d="M1057 259l3-4.500h6l3 4.500z" fill="#6878f0"/><path d="M1060 254.500h6l-1 2h-4z" fill="#2030c0"/><rect x="1057" y="259" width="12" height="3.500" fill="#0a0a9c"/><path d="M1078 252.500v3.500q0 3 2 3t2-3v-3.500M1080 259v3q0 2.500 2.500 2.500t2.500-2.500v-1" stroke="#1a1a2a" stroke-width="1.300" fill="none"/><circle cx="1085" cy="260" r="1.500" fill="#1a1a2a"/><path d="M886 338.500h15" stroke="#8a8a8a" stroke-width="2"/><path d="M886 412.500h15" stroke="#00ff00" stroke-width="2"/><path d="M886 489h15M886 565h15" stroke="#111" stroke-width="2"/><path d="M1095 310h15M1095 492h15M1110.500 488.500v7M1095 511h15M1110.500 507.500v7M1095 530h15" stroke="#8a8a8a" stroke-width="1.500" fill="none"/><path d="M1095 386.500h15M1110 383v7" stroke="#00ff00" stroke-width="2" fill="none"/><path d="M1096 462.500h14" stroke="#0000ff" stroke-width="2" stroke-dasharray="5 2"/><path d="M1110 459v7" stroke="#0000ff" stroke-width="2"/><path d="M905 288.500H925M905 345.500H930M905 421.500H950M905 497.500H950M1000 317.500H1091M1065 394.500H1091M1000 499.500H1091M1060 518.500H1091" stroke="#f0f0f6"/><ellipse cx="1133" cy="366" rx="97" ry="38" fill="none" stroke="#ee2a20" stroke-width="3"/></svg>
<div class="t sb" style="left:998px;top:238.2px;font-size:11px;transform:translateX(-50%);">MC_HOME</div>
<div class="t b" style="left:998px;top:201.2px;font-size:11px;transform:translateX(-50%);color:#1a9aa0;">%DB5</div>
<div class="t " style="left:998px;top:217.2px;font-size:11px;transform:translateX(-50%);">"MC_HOME_DB"</div>
<div class="t sb" style="left:906px;top:276.4px;font-size:11px;">EN</div>
<div class="t sb" style="left:906px;top:332.9px;font-size:11px;">Axis</div>
<div class="t sb" style="left:906px;top:408.9px;font-size:11px;">Execute</div>
<div class="t sb" style="left:906px;top:484.9px;font-size:11px;">Position</div>
<div class="t sb" style="left:906px;top:560.9px;font-size:11px;">Mode</div>
<div class="t sb" style="left:1091px;top:276.0px;font-size:11px;transform:translateX(-100%);">ENO</div>
<div class="t sb" style="left:1091px;top:290.5px;font-size:11px;transform:translateX(-100%);">ReferenceMarkP</div>
<div class="t sb" style="left:1091px;top:304.5px;font-size:11px;transform:translateX(-100%);">osition</div>
<div class="t sb" style="left:1091px;top:381.3px;font-size:11px;transform:translateX(-100%);">Done</div>
<div class="t sb" style="left:1091px;top:457.5px;font-size:11px;transform:translateX(-100%);">Busy</div>
<div class="t sb" style="left:1091px;top:472.2px;font-size:11px;transform:translateX(-100%);">CommandAbort</div>
<div class="t sb" style="left:1091px;top:486.5px;font-size:11px;transform:translateX(-100%);">ed</div>
<div class="t sb" style="left:1091px;top:506.5px;font-size:11px;transform:translateX(-100%);">Error</div>
<div class="t sb" style="left:1091px;top:525.5px;font-size:11px;transform:translateX(-100%);">ErrorId</div>
<div class="t b" style="left:882px;top:315.2px;font-size:11px;transform:translateX(-100%);color:#1a9aa0;">%DB1</div>
<div class="t " style="left:882px;top:331.2px;font-size:11px;transform:translateX(-100%);">"Axis_1"</div>
<div class="a" style="left:850px;top:362px;width:33px;height:12px;background:#d4d4d4;"></div>
<div class="t " style="left:882px;top:363.2px;font-size:11px;transform:translateX(-100%);">TRUE</div>
<div class="t " style="left:883px;top:377.2px;font-size:11px;transform:translateX(-100%);"><span style="letter-spacing:0.14em">&quot;</span>VirtualAxis1<span style="letter-spacing:0.14em">&quot;</span>.</div>
<div class="t " style="left:883px;top:391.2px;font-size:11px;transform:translateX(-100%);">Controll.MC_</div>
<div class="t " style="left:883px;top:405.2px;font-size:11px;transform:translateX(-100%);">HOME.Execute</div>
<div class="a" style="left:859px;top:438px;width:24px;height:12px;background:#d4d4d4;"></div>
<div class="t " style="left:882px;top:439.2px;font-size:11px;transform:translateX(-100%);">0.0</div>
<div class="t " style="left:883px;top:453.7px;font-size:11px;transform:translateX(-100%);"><span style="letter-spacing:0.14em">&quot;</span>VirtualAxis1<span style="letter-spacing:0.14em">&quot;</span>.</div>
<div class="t " style="left:883px;top:467.7px;font-size:11px;transform:translateX(-100%);">Controll.MC_</div>
<div class="t " style="left:883px;top:481.7px;font-size:11px;transform:translateX(-100%);">HOME.Position</div>
<div class="a" style="left:869px;top:514px;width:14px;height:12px;background:#d4d4d4;"></div>
<div class="t " style="left:882px;top:515.2px;font-size:11px;transform:translateX(-100%);">3</div>
<div class="t " style="left:883px;top:529.2px;font-size:11px;transform:translateX(-100%);"><span style="letter-spacing:0.14em">&quot;</span>VirtualAxis1<span style="letter-spacing:0.14em">&quot;</span>.</div>
<div class="t " style="left:883px;top:543.2px;font-size:11px;transform:translateX(-100%);">Controll.MC_</div>
<div class="t " style="left:883px;top:557.2px;font-size:11px;transform:translateX(-100%);">HOME.Mode</div>
<div class="t " style="left:1113px;top:304.2px;font-size:11px;">...</div>
<div class="t " style="left:1113px;top:486.2px;font-size:11px;">...</div>
<div class="t " style="left:1113px;top:505.2px;font-size:11px;">...</div>
<div class="t " style="left:1113px;top:524.2px;font-size:11px;">...</div>
<div class="a" style="left:1113px;top:335px;width:33px;height:12px;background:#d4d4d4;"></div>
<div class="t " style="left:1114px;top:336.2px;font-size:11px;">TRUE</div>
<div class="t " style="left:1113px;top:350.0px;font-size:11px;"><span style="letter-spacing:0.14em">&quot;</span>VirtualAxis1<span style="letter-spacing:0.14em">&quot;</span>.</div>
<div class="t " style="left:1113px;top:364.0px;font-size:11px;">Controll.MC_</div>
<div class="t " style="left:1113px;top:378.0px;font-size:11px;">HOME.Done</div>
<div class="a" style="left:1113px;top:411px;width:40px;height:12px;background:#d4d4d4;"></div>
<div class="t " style="left:1114px;top:412.2px;font-size:11px;">FALSE</div>
<div class="t " style="left:1113px;top:425.7px;font-size:11px;"><span style="letter-spacing:0.14em">&quot;</span>VirtualAxis1<span style="letter-spacing:0.14em">&quot;</span>.</div>
<div class="t " style="left:1113px;top:439.7px;font-size:11px;">Controll.MC_</div>
<div class="t " style="left:1113px;top:453.7px;font-size:11px;">HOME.Busy</div>
<div class="t " style="left:1193px;top:394px;font-size:16px;color:#f5281c;font-weight:400;">确保在原点，满足绝对</div>
<div class="t " style="left:1193px;top:415px;font-size:16px;color:#f5281c;font-weight:400;">方式启动条件</div>
<div class="a" style="left:747px;top:706px;width:619px;height:18px;background:#e6e6e6;"></div>
<div class="a" style="left:747px;top:724px;width:619px;height:1px;background:#111;"></div>
<div class="a" style="left:747px;top:725px;width:619px;height:2px;background:#fff;"></div>
<div class="a" style="left:1111px;top:706px;width:155px;height:18px;background:#fff;box-sizing:border-box;border:1px solid #777;"></div>
<div class="t " style="left:1115px;top:709.7px;font-size:12px;">100%</div>
<div class="a" style="left:1250px;top:707px;width:15px;height:16px;background:#e8e8e8;box-sizing:border-box;border:1px solid #aaa;"></div>
<svg width="1366" height="727" viewBox="0 0 1366 727" style="left:0;top:0;"><path d="M1254 714h8l-4 4z" fill="#111"/><path d="M1285 714.500h66" stroke="#777"/><path d="M1285.5 720v3M1290.1 720v3M1294.8 720v3M1299.4 720v3M1304.1 720v3M1308.7 720v3M1313.3 720v3M1318.0 720v3M1322.6 720v3M1327.3 720v3M1331.9 720v3M1336.5 720v3M1341.2 720v3M1345.8 720v3M1350.5 720v3" stroke="#222" stroke-width="1.200"/><path d="M1305.500 710.500h6v6l-3 3-3-3z" fill="#d8d8d8" stroke="#888"/></svg>
</div></div>
<!-- watermark -->
<div style="position:absolute;white-space:nowrap;line-height:1;font-weight:bold;color:rgba(255,255,255,0.550);-webkit-text-stroke:1px rgba(130,130,130,0.240);transform-origin:0 50%;left:512px;top:426px;font-size:36px;transform:rotate(-28.700deg);letter-spacing:3px;">西门子工业</div>
<div style="position:absolute;white-space:nowrap;line-height:1;font-weight:bold;color:rgba(255,255,255,0.550);-webkit-text-stroke:1px rgba(130,130,130,0.240);transform-origin:0 50%;left:703px;top:320px;font-size:36px;transform:rotate(-28.700deg);letter-spacing:4.500px;">技术论坛</div>
<div style="position:absolute;white-space:nowrap;line-height:1;font-weight:bold;color:rgba(255,255,255,0.550);-webkit-text-stroke:1px rgba(130,130,130,0.240);transform-origin:0 50%;left:522px;top:462px;font-size:24.600px;transform:rotate(-28.800deg);">support.industry.siemens.com/cs</div>
<!-- plcsim -->
<div class="a" style="left:1097px;top:0;width:219px;height:255px;overflow:hidden;"><div class="a" style="left:-1097px;top:0;width:1366px;height:727px;">
<div class="a" style="left:1097px;top:0px;width:219px;height:25px;background:#5a5a5a;background:linear-gradient(180deg,#a8a8a8 0,#7c7c7c 5px,#5c5c5c 9px,#555 100%);"></div>
<div class="a" style="left:1097px;top:24px;width:219px;height:1px;background:#1e1e1e;"></div>
<div class="a" style="left:1097px;top:25px;width:219px;height:30px;background:#cfcfcf;"></div>
<div class="a" style="left:1097px;top:55px;width:219px;height:169px;background:#50606f;"></div>
<div class="a" style="left:1097px;top:224px;width:219px;height:30px;background:#cfcfcf;"></div>
<div class="a" style="left:1097px;top:254px;width:219px;height:1px;background:#2a2a2a;"></div>
<div class="a" style="left:1097px;top:0px;width:1px;height:255px;background:#2a2a2a;"></div>
<div class="a" style="left:1315px;top:0px;width:1px;height:255px;background:#2a2a2a;"></div>
<div class="a" style="left:1104px;top:4px;width:17px;height:16px;background:#3a3a3a;"></div>
<div class="t w b" style="left:1104px;top:3px;font-size:9px;letter-spacing:-0.700px;">PLC</div>
<div class="a" style="left:1104px;top:12px;width:17px;height:8px;background:#4a4f78;"></div>
<div class="t " style="left:1104.5px;top:11.5px;font-size:9px;color:#b8c4ff;letter-spacing:-0.400px;">SIM</div>
<div class="t w" style="left:1128px;top:5.0px;font-size:14.4px;">Siemens</div>
<div class="t " style="left:1106px;top:36.2px;font-size:11px;color:#15152a;letter-spacing:-0.450px;">PLC_1 [CPU 1515-2 PN]</div>
<div class="a" style="left:1106px;top:65px;width:68px;height:16px;background:#0f9aa4;"></div>
<div class="t b w" style="left:1140px;top:66.3px;font-size:13px;transform:translateX(-50%);letter-spacing:0.400px;">SIEMENS</div>
<div class="a" style="left:1107px;top:90px;width:26px;height:26px;background:#44515d;box-sizing:border-box;border:3px solid;border-color:#38444f #7e8b98 #7e8b98 #38444f;"></div>
<div class="a" style="left:1252px;top:91px;width:48px;height:28px;background:#44515d;box-sizing:border-box;border:3px solid;border-color:#38444f #7e8b98 #7e8b98 #38444f;"></div>
<div class="t w" style="left:1276px;top:100.5px;font-size:10.3px;transform:translateX(-50%);">RUN</div>
<div class="a" style="left:1252px;top:124px;width:48px;height:28px;background:#4c5a67;box-sizing:border-box;border:3px solid;border-color:#66747f #3b4752 #3b4752 #66747f;"></div>
<div class="t w" style="left:1276px;top:133.5px;font-size:10.3px;transform:translateX(-50%);">STOP</div>
<div class="a" style="left:1252px;top:157px;width:48px;height:28px;background:#4c5a67;box-sizing:border-box;border:3px solid;border-color:#66747f #3b4752 #3b4752 #66747f;"></div>
<div class="t w" style="left:1276px;top:166.5px;font-size:10.3px;transform:translateX(-50%);">MRES</div>
<div class="a" style="left:1114px;top:123.5px;width:11px;height:11px;background:#72e800;box-sizing:border-box;border:1px solid #a8b4b0;"></div>
<div class="t w" style="left:1134px;top:124.6px;font-size:10px;letter-spacing:-0.200px;">RUN/STOP</div>
<div class="a" style="left:1114px;top:143.5px;width:11px;height:11px;background:#c4c4c4;box-sizing:border-box;border:1px solid #a8b4b0;"></div>
<div class="t w" style="left:1134px;top:144.6px;font-size:10px;letter-spacing:-0.200px;">ERROR</div>
<div class="a" style="left:1114px;top:163.5px;width:11px;height:11px;background:#c4c4c4;box-sizing:border-box;border:1px solid #a8b4b0;"></div>
<div class="t w" style="left:1134px;top:164.6px;font-size:10px;letter-spacing:-0.200px;">MAINT</div>
<div class="t w" style="left:1113px;top:192.7px;font-size:12px;">X1</div>
<div class="t w" style="left:1299px;top:192.7px;font-size:12px;transform:translateX(-100%);">192.168.0.1</div>
<div class="t w" style="left:1113px;top:206.7px;font-size:12px;">X2</div>
<div class="t w" style="left:1299px;top:206.7px;font-size:12px;transform:translateX(-100%);">192.168.1.1</div>
<div class="t " style="left:1108px;top:235.7px;font-size:12px;color:#15152a;">&lt;无项目&gt;</div>
<svg width="1366" height="727" viewBox="0 0 1366 727" style="left:0;top:0;"><g fill="none" stroke="#fff" stroke-width="2"><path d="M1268 7h7v6"/><rect x="1265" y="10" width="7" height="6" fill="#fff"/><path d="M1284 16h10" stroke-width="3"/><path d="M1299 6.500l10 10.500M1309 6.500l-10 10.500"/></g><rect x="1290.500" y="32.500" width="15" height="15" fill="#fff" stroke="#999"/><rect x="1292" y="34" width="5" height="5" fill="#445"/><path d="M1296 38l4 4M1300 39v3h-3" stroke="#8a6ae0" stroke-width="1.200" fill="none"/><path d="M1299 35.500h5M1301 38.500h3M1293 44.500h11M1301 41.500h3" stroke="#555"/><path d="M1116.500 99a6 6 0 1 0 7 0" stroke="#2cc02c" stroke-width="1.600" fill="none"/><path d="M1120 96v7" stroke="#2cc02c" stroke-width="1.600"/></svg>
</div></div>
</body>
</html>
